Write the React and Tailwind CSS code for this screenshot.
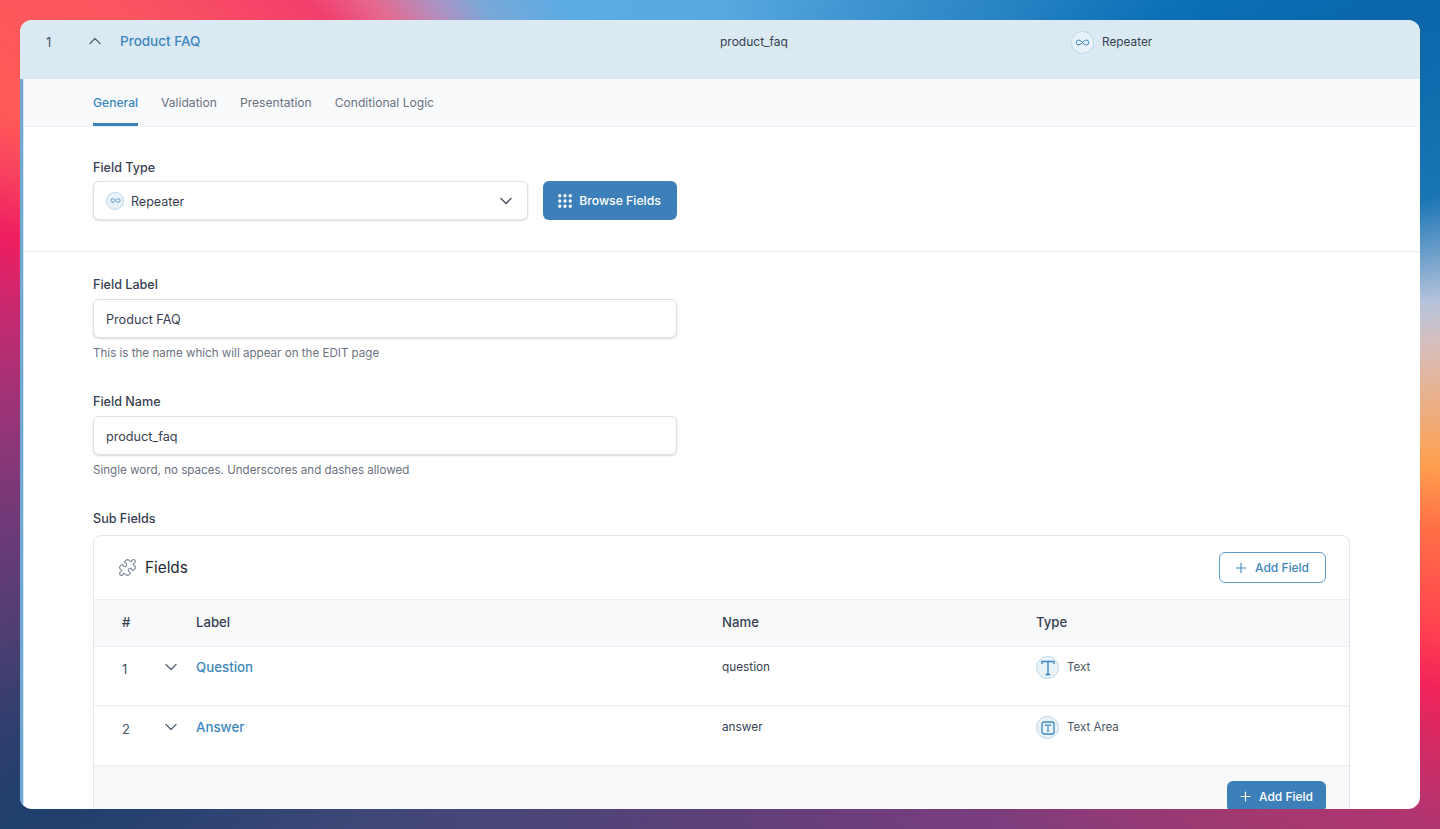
import React from "react";
import { ChevronDown, ChevronUp, Grip, Infinity as InfinityIcon, Plus, Puzzle } from "lucide-react";

const TextIcon = () => (
  <svg width="14" height="16" viewBox="0 0 14 16" fill="none" stroke="currentColor" strokeWidth="1.4">
    <path d="M1 4V1.5h12V4M7 1.5V14.5M4.5 14.5h5" />
  </svg>
);

const TextAreaIcon = () => (
  <svg width="14" height="14" viewBox="0 0 14 14" fill="none" stroke="currentColor" strokeWidth="1.3">
    <rect x="1" y="1" width="12" height="12" rx="2" />
    <path d="M4.5 5V4h5v1M7 4v6M5.8 10h2.4" strokeWidth="1.1" />
  </svg>
);

const TypeBadge = ({ children, size = "w-[23px] h-[23px]" }) => (
  <span className={`${size} shrink-0 rounded-full bg-[#e9f2f8] border border-[#bcd9ec] text-[#3d87bd] flex items-center justify-center`}>
    {children}
  </span>
);

const Label = ({ children }) => (
  <label className="block pt-[2px] text-[12.6px] leading-[18px] font-medium text-[#374151]">{children}</label>
);

const Field = ({ label, value, help, className = "" }) => (
  <div className={`w-[584px] ${className}`}>
    <Label>{label}</Label>
    <div className="mt-[5px] h-[39px] px-3 pt-[3px] flex items-center bg-white rounded-md border border-[#dde1e8] shadow-[0_1px_2px_rgba(60,70,90,0.2)] text-[12.65px] text-[#374151]">
      {value}
    </div>
    <p className="mt-[7px] text-[11.6px] leading-4 text-[#6b7280]">{help}</p>
  </div>
);

const rows = [
  { id: 1, label: "Question", name: "question", type: "Text", icon: <TextIcon /> },
  { id: 2, label: "Answer", name: "answer", type: "Text Area", icon: <TextAreaIcon /> },
];

const App = () => {
  return (
    <div className="w-[1440px] h-[829px] p-5 overflow-hidden font-['Inter',sans-serif] bg-[conic-gradient(from_0deg_at_50%_50%,#58a9df_0deg,#2a85c5_34deg,#0a6fb5_49deg,#0b66aa_60deg,#1a75b5_73deg,#b5c3dc_81deg,#d5bfc0_84deg,#ffa050_94deg,#ff7045_99deg,#ff3f50_107deg,#f0235a_111deg,#b03570_120deg,#a5386f_126deg,#7a3d7e_146deg,#5e4078_180deg,#404878_221deg,#1f3f6c_240deg,#2f3f6e_246deg,#4f3e72_253deg,#6e3a78_261deg,#943578_269deg,#c52a70_278deg,#ee1e60_284deg,#fa4a5e_290deg,#ff5a55_293deg,#fb5560_304deg,#f23d6c_315deg,#e56a90_320deg,#b090c0_325deg,#78a8d8_330deg,#5cabe3_339deg,#58a9df_360deg)]">
      <div className="h-[789px] rounded-xl overflow-hidden bg-white flex flex-col">
        {/* field header */}
        <div className="h-[59px] shrink-0 bg-[#dbe9f3] pt-[10px] pl-[24px] flex items-start text-[#4b5563]">
          <span className="w-[41px] pl-[2px] text-[13px] leading-[24px]">1</span>
          <span className="w-[35px] h-[21px] flex items-center">
            <ChevronUp size={20} strokeWidth={1.7} className="text-[#5f6b7a]" />
          </span>
          <span className="w-[600px] text-[13.5px] leading-[23px] font-medium text-[#3d87bd]">Product FAQ</span>
          <span className="w-[351px] text-xs leading-[23px] text-[#374151]">product_faq</span>
          <span className="flex items-center gap-2 text-[11.8px] leading-[23px] text-[#374151]">
            <TypeBadge><InfinityIcon size={15} strokeWidth={1.6} /></TypeBadge>
            <span className="pt-px">Repeater</span>
          </span>
        </div>

        <div className="flex-1 min-h-0 border-l-[3px] border-[#6fa8d0]">
          <div className="h-full border-l border-[#d3e6f3]">
            {/* tabs */}
            <div className="h-[48px] bg-[#f8fafc] border-b border-[#eceff3] pl-[69px] flex gap-[23px] text-[12.1px] text-[#6b7280]">
              <span className="h-[47px] pt-[4px] flex items-center border-b-[3px] border-[#3d83bb] text-[#3d87bd] font-medium">General</span>
              <span className="h-[47px] pt-[2px] flex items-center">Validation</span>
              <span className="h-[47px] pt-[2px] flex items-center">Presentation</span>
              <span className="h-[47px] pt-[2px] flex items-center">Conditional Logic</span>
            </div>

            {/* field type */}
            <div className="pt-[30px] pb-[31px] pl-[69px] border-b border-[#e9ecf0]">
              <Label>Field Type</Label>
              <div className="mt-1 flex gap-[15px]">
                <div className="w-[435px] h-[39px] pl-3 pr-[11px] flex items-center bg-white rounded-md border border-[#dde1e8] shadow-[0_1px_2px_rgba(60,70,90,0.2)] text-[12.5px] text-[#374151]">
                  <TypeBadge size="w-[18px] h-[18px]"><InfinityIcon size={11} strokeWidth={1.7} /></TypeBadge>
                  <span className="ml-[7px] flex-1 pt-[3px]">Repeater</span>
                  <ChevronDown size={20} strokeWidth={1.7} className="text-[#4b5563]" />
                </div>
                <button className="w-[134px] h-[39px] pr-[3px] rounded-md bg-[#3d80b9] text-white text-[12.25px] font-medium flex items-center justify-center gap-[5px]">
                  <Grip size={18} strokeWidth={2.4} />
                  <span className="pt-px">Browse Fields</span>
                </button>
              </div>
            </div>

            <div className="pt-[22px] pl-[69px] pr-[70px]">
              <Field label="Field Label" value="Product FAQ" help="This is the name which will appear on the EDIT page" className="mb-[30px]" />
              <Field label="Field Name" value="product_faq" help="Single word, no spaces. Underscores and dashes allowed" className="mb-[30px]" />
              <Label>Sub Fields</Label>

              {/* sub fields card */}
              <div className="mt-[7px] rounded-t-lg border border-[#e2e5eb] overflow-hidden">
                <div className="h-[63px] pl-6 pr-[23px] flex items-center justify-between">
                  <div className="flex items-center gap-2 text-[15.3px] text-[#1f2937]">
                    <Puzzle size={19} strokeWidth={1.4} className="text-[#7b8794]" />
                    <span className="pt-px">Fields</span>
                  </div>
                  <button className="w-[107px] h-[31px] pr-[3px] rounded-md border border-[#5f9ccb] bg-white text-[#3d87bd] text-xs font-medium flex items-center justify-center gap-[6px]">
                    <Plus size={16} strokeWidth={1.6} />
                    <span className="pt-px">Add Field</span>
                  </button>
                </div>
                <div className="h-[48px] pl-[28px] bg-[#f7f9fb] border-y border-[#eceff3] flex items-center text-[13.2px] font-medium text-[#374151]">
                  <span className="w-[74px]">#</span>
                  <span className="w-[526px]">Label</span>
                  <span className="w-[314px]">Name</span>
                  <span>Type</span>
                </div>
                {rows.map((row) => (
                  <div key={row.id} className="h-[60px] pl-[28px] pt-[9px] border-b-2 border-[#f0f2f5] flex items-start text-[11.8px] leading-[23px] text-[#4b5563]">
                    <span className="w-[39px] pt-px text-[13px] leading-[24px]">{row.id}</span>
                    <span className="w-[35px] h-[21px] flex items-center">
                      <ChevronDown size={20} strokeWidth={1.7} className="text-[#5f6b7a]" />
                    </span>
                    <span className="w-[526px] text-[13.3px] font-medium text-[#3d87bd]">{row.label}</span>
                    <span className="w-[314px] text-[#374151]">{row.name}</span>
                    <span className="flex items-center gap-2 text-[11.5px]">
                      <TypeBadge>{row.icon}</TypeBadge>
                      <span>{row.type}</span>
                    </span>
                  </div>
                ))}
                <div className="h-[60px] pt-[14px] pr-[23px] bg-[#f7f9fb] flex justify-end">
                  <button className="w-[99px] h-[31px] pr-[2px] rounded-md bg-[#3d80b9] text-white text-xs font-medium flex items-center justify-center gap-[6px]">
                    <Plus size={15} strokeWidth={1.8} />
                    <span className="pt-px">Add Field</span>
                  </button>
                </div>
              </div>
            </div>
          </div>
        </div>
      </div>
    </div>
  );
};

export default App;
